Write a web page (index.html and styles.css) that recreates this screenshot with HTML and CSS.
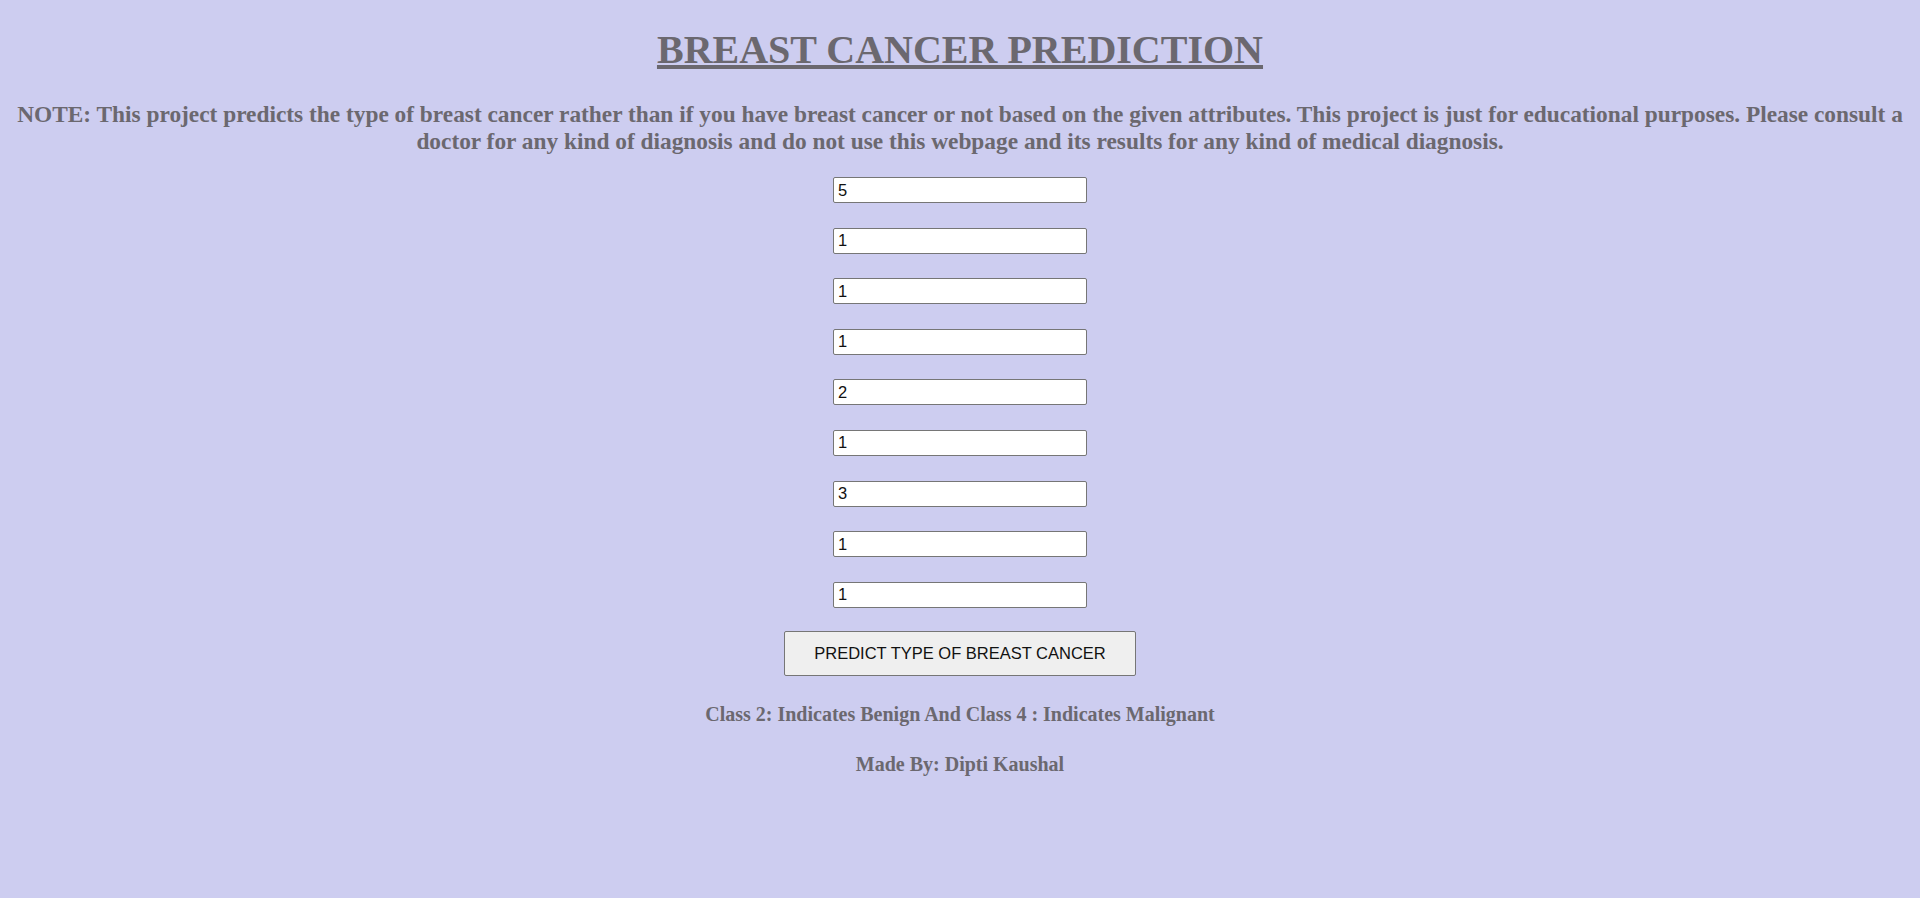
FILE: index.html
```html
<!DOCTYPE html>
<html lang="en">
<head>
<meta charset="utf-8">
<title>Breast Cancer Prediction</title>
<link rel="stylesheet" href="styles.css">
</head>
<body>
<h1 class="title">BREAST CANCER PREDICTION</h1>
<h2 class="note">NOTE: This project predicts the type of breast cancer rather than if you have breast cancer or not based on the given attributes. This project is just for educational purposes. Please consult a doctor for any kind of diagnosis and do not use this webpage and its results for any kind of medical diagnosis.</h2>
<form class="form">
  <input class="field" type="text" value="5">
  <input class="field" type="text" value="1">
  <input class="field" type="text" value="1">
  <input class="field" type="text" value="1">
  <input class="field" type="text" value="2">
  <input class="field" type="text" value="1">
  <input class="field" type="text" value="3">
  <input class="field" type="text" value="1">
  <input class="field" type="text" value="1">
  <button class="predict" type="button">PREDICT TYPE OF BREAST CANCER</button>
</form>
<h3 class="info info-class">Class 2: Indicates Benign And Class 4 : Indicates Malignant</h3>
<h3 class="info info-author">Made By: Dipti Kaushal</h3>
</body>
</html>
```

FILE: styles.css
```css
html {
  background: #cdcdf0;
}

body {
  margin: 0;
  padding: 0 8px;
  min-height: 898px;
  box-sizing: border-box;
  background: #cdcdf0;
  color: #6b686f;
  font-family: "Liberation Serif", "Times New Roman", serif;
  text-align: center;
}

.title {
  margin: 0;
  padding-top: 27px;
  font-size: 40px;
  line-height: 46px;
  font-weight: bold;
  text-decoration: underline;
}

.note {
  margin: 28px 0 0;
  font-size: 23.35px;
  line-height: 27px;
  font-weight: bold;
}

.form {
  margin: 22px 0 0;
  display: flex;
  flex-direction: column;
  align-items: center;
  gap: 24.6px;
}

.field {
  box-sizing: border-box;
  width: 254px;
  height: 26px;
  margin: 0;
  padding: 0 4px;
  border: 1px solid #767676;
  border-radius: 2px;
  background: #ffffff;
  color: #111111;
  font-family: "Liberation Sans", Arial, sans-serif;
  font-size: 16.5px;
}

.predict {
  box-sizing: border-box;
  height: 45px;
  margin-top: -1px;
  padding: 0 29px;
  border: 1px solid #767676;
  border-radius: 2px;
  background: #efefef;
  color: #111111;
  font-family: "Liberation Sans", Arial, sans-serif;
  font-size: 16.5px;
}

.info {
  margin: 27px 0 0;
  font-size: 20px;
  line-height: 23px;
  font-weight: bold;
}

.info-author {
  margin-top: 27px;
}
```
